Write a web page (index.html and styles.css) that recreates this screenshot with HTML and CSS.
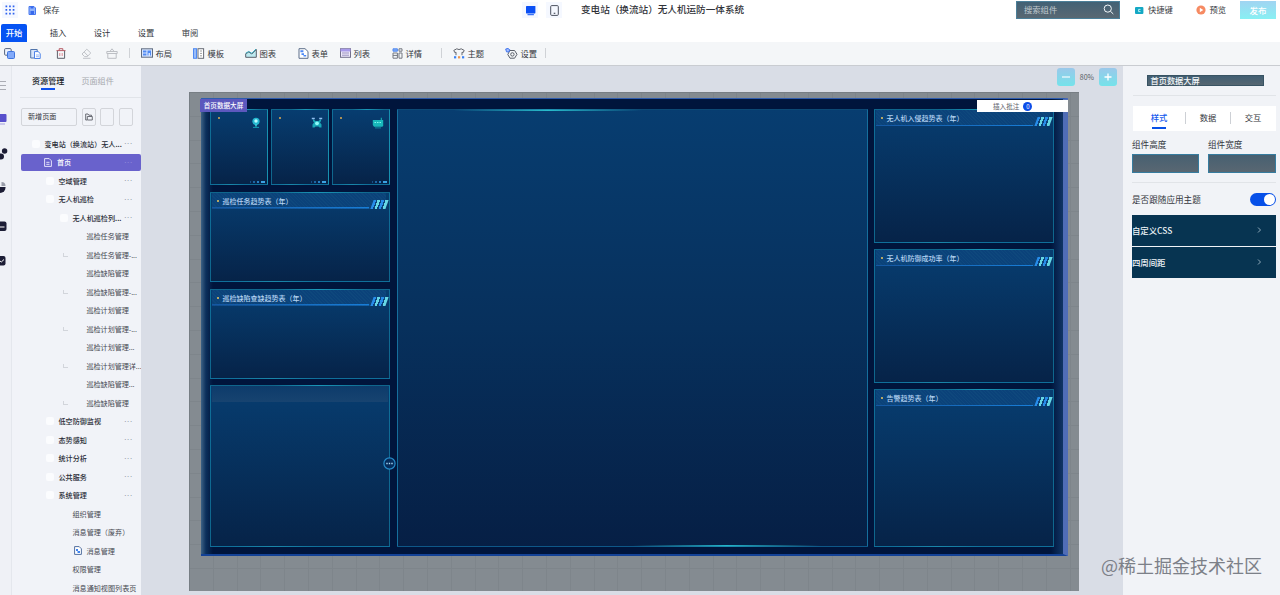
FILE: index.html
```html
<!DOCTYPE html>
<html lang="zh-CN">
<head>
    <meta charset="UTF-8">
    <meta name="viewport" content="width=device-width, initial-scale=1.0">
    <title>变电站（换流站）无人机运防一体系统</title>
    <link rel="stylesheet" href="styles.css">
</head>
<body>
    <header class="topbar">
        <span class="apps"><svg width="10" height="10" viewBox="0 0 10 10" fill="#2f62ee"><path d="M.5 .5h1.7v1.7H.5zM4.1 .5h1.7v1.7H4.1zM7.7 .5h1.7v1.7H7.7zM.5 4.1h1.7v1.7H.5zM4.1 4.1h1.7v1.7H4.1zM7.7 4.1h1.7v1.7H7.7zM.5 7.7h1.7v1.7H.5zM4.1 7.7h1.7v1.7H4.1zM7.7 7.7h1.7v1.7H7.7z"/></svg></span>
        <svg width="8" height="9" viewBox="0 0 8 9"><path d="M1 .5h5L7.5 2v6.5H1z" fill="#8fb2fa" stroke="#4676ee"/><path d="M2.5 .5h3v2h-3zM2.5 5h3.500v3.500H2.500z" fill="#3769ed"/></svg>
        <span class="save">保存</span>
        <span class="device on"><svg width="11" height="11" viewBox="0 0 11 11" fill="#0a4ff5"><rect x="1" y="1" width="9.4" height="7.4" rx=".6"/><path d="M2.5 9.2h6.4v1H2.5z"/></svg></span>
        <span class="device"><svg width="9" height="11" viewBox="0 0 9 11" fill="none" stroke="#4d5260"><rect x=".7" y=".6" width="7.6" height="9.8" rx="1"/><path d="M3.7 8.3h1.6" stroke-width="1.2"/></svg></span>
        <span class="title">变电站（换流站）无人机运防一体系统</span>
        <div class="search">
            <span>搜索组件</span>
            <svg width="11" height="11" viewBox="0 0 11 11" fill="none" stroke="#f2f7fa"><circle cx="4.8" cy="4.6" r="3.6"/><path d="M7.5 7.3 10.3 10"/></svg>
        </div>
        <svg width="9" height="7" viewBox="0 0 9 7"><rect width="8.4" height="7" rx="1" fill="#14a8c4"/><path d="M5.5 2.4H3.6v2.2h1.9" fill="none" stroke="#c9f6fb" stroke-width=".9"/></svg>
        <span>快捷键</span>
        <svg width="10" height="10" viewBox="0 0 10 10"><circle cx="5" cy="5" r="4.6" fill="#f68a62"/><path d="M3.8 2.8v4.4L7.3 5z" fill="#fff"/></svg>
        <span>预览</span>
        <button class="publish">发布</button>
    </header>

    <nav class="menu">
        <a class="active">开始</a>
        <a>插入</a>
        <a>设计</a>
        <a>设置</a>
        <a>审阅</a>
    </nav>

    <div class="toolbar">
        <svg width="11" height="11" viewBox="0 0 11 11"><rect x=".6" y=".6" width="6.6" height="6.6" rx="1" fill="#eef4ff" stroke="#56647d"/><rect x="3.5" y="3.5" width="7" height="7" rx="1" fill="#82aafa" stroke="#3f75dd"/></svg>
        <svg width="11" height="11" viewBox="0 0 11 11"><path d="M.7 1.5h6.5v8.5H.7z" fill="#d6e4fb" stroke="#5275ac"/><path d="M4.5 3.6h3.6L10.2 5.5v5H4.5z" fill="#fff" stroke="#4c82e8"/><path d="M6 7h3M6 8.7h3" stroke="#6b9af0" stroke-width=".7"/></svg>
        <svg width="10" height="11" viewBox="0 0 10 11" fill="none"><path d="M.5 2.6h9M3.2 2.4V.7h3.6v1.7" stroke="#b65a64"/><path d="M1.4 3v7.3h7.2V3" stroke="#5d6069"/><path d="M3.8 5v3M6.2 5v3" stroke="#de8b94"/></svg>
        <svg width="11" height="11" viewBox="0 0 11 11" fill="none" stroke="#c0c3c8"><path d="M1 6 5.8 1.2 9.8 5 6.2 8.6H3.6zM3.2 4l3.8 4M2 10.3h7.5"/></svg>
        <svg width="12" height="11" viewBox="0 0 12 11" fill="none" stroke="#bcbfc4"><path d="M.8 3.5h10.4v2H.8zM1.8 5.5h8.4v4.8H1.8zM4 3.3 6 .8l2 2.5"/></svg>
        <i class="sep"></i>
        <span class="tool"><svg width="12" height="10" viewBox="0 0 12 10"><rect x=".5" y=".8" width="11" height="8.4" fill="#d7e5ff" stroke="#606c80"/><path d="M2 2.4h3.4v2H2zM2 5.4h3.4v2H2zM6.5 2.4H10v5H9V5H7.5v2.4h-1z" fill="#508af2"/></svg>布局</span>
        <span class="tool"><svg width="12" height="11" viewBox="0 0 12 11"><rect x=".5" y=".7" width="3" height="9.6" fill="#99bcf8" stroke="#508af2"/><rect x="5" y=".7" width="5.6" height="9.6" fill="#fff" stroke="#666b75"/><path d="M7 3h2M7 5.4h2M7 7.8h2" stroke="#777" stroke-width=".7"/></svg>模板</span>
        <span class="tool"><svg width="12" height="10" viewBox="0 0 12 10"><path d="M.7 9.3V5.8L3.8 4l3 2 4.5-4.5v7.8z" fill="#bdeaf0" stroke="#595f6a"/><path d="M.7 5.2 3.8 3.5l3 1.8L11 1" fill="none" stroke="#37a7bb"/></svg>图表</span>
        <span class="tool"><svg width="11" height="11" viewBox="0 0 11 11"><path d="M1 .7h6L10 3.5v6.8H1z" fill="#fff" stroke="#5d6f8b"/><path d="M2.4 2.3h3v2h-3zM3.5 5.300H6V7H3.500zM5.500 7h2.700v1.500H5.500z" fill="#4c88f5"/></svg>表单</span>
        <span class="tool"><svg width="11" height="10" viewBox="0 0 11 10"><rect x=".5" y=".7" width="10" height="8.6" fill="#eeeafa" stroke="#74718c"/><path d="M.5 .7h10v2.8H.5z" fill="#a89aea"/><path d="M2 5h7M2 7.2h7" stroke="#9a91bf"/></svg>列表</span>
        <span class="tool"><svg width="11" height="11" viewBox="0 0 11 11" fill="none" stroke="#747881"><path d="M1 .8h4.4v2.4H1z" fill="#7ca9f7" stroke="#528af0"/><path d="M1 5h4.4v5.2H1zM7 5h3v5.2H7zM1 7.4h4.4"/><path d="M7 .8h3v2.4H7z"/></svg>详情</span>
        <i class="sep"></i>
        <span class="tool"><svg width="12" height="11" viewBox="0 0 12 11"><path d="M3 7.200V4.200l-1.200.4L.8 2.400 3.800 .800Q6 2.400 8.200 .800l3 1.600-1 2.200L9 4.200v3" fill="none" stroke="#63666e"/><path d="M1 8.200h2.200v2.200H1z" fill="#3982f5"/><path d="M5 8.200h2.200v2.200H5z" fill="#f1964b"/><path d="M9 8.200h2.200v2.200H9z" fill="#3982f5"/></svg>主题</span>
        <span class="tool"><svg width="13" height="11" viewBox="0 0 13 11" fill="none"><path d="M4.8 2.5h4.8L12 6.3l-2.4 3.9H5L2.8 6.5z" stroke="#5b606a"/><circle cx="7.4" cy="6.4" r="1.7" stroke="#5b606a"/><path d="M.7 1 3 .5l1.8 1.3L3.7 4 1.5 3.8z" fill="#a5bdfd" stroke="#3d73ee"/></svg>设置</span>
        <i class="sep"></i>
    </div>

    <main class="workspace">
        <aside class="rail">
            <svg width="8" height="190" viewBox="0 0 8 190">
                <path d="M0 5.500h6M0 9.500h6M0 13.500h6" stroke="#989ba3" stroke-width=".8"/>
                <rect x="-3" y="38" width="9.5" height="8" rx="1" fill="#5750cc"/><path d="M0 48h5" stroke="#a39fe1"/>
                <g fill="#1c1d35"><circle cx="4.6" cy="75" r="2.7"/><circle cx="1" cy="80.5" r="3"/><path d="M-4 111h9.500A5.500 5.500 0 0 1 0 117z"/><rect x="-4" y="145.500" width="10.500" height="9.500" rx="2"/><rect x="-5" y="180" width="10.500" height="9.500" rx="2"/></g>
                <path d="M1.500 110v-4a4 4 0 0 1 4 4z" fill="#999da9"/>
                <path d="M0 151h4.500M0 185l1.300 1 2.700-2.500" fill="none" stroke="#fff"/>
            </svg>
        </aside>

        <aside class="sidebar">
            <div class="side-tabs">
                <span class="active">资源管理</span>
                <span>页面组件</span>
            </div>
            <div class="side-actions">
                <span class="new-page">新增页面</span>
                <span class="box"><svg width="8" height="8" viewBox="0 0 8 8" fill="none" stroke="#5c5f68" stroke-width=".9"><path d="M2 7H.7V1h2.300l.8 1.200h2.700v1M2.300 3.500h5V7h-5z"/></svg></span>
                <span class="box"></span>
                <span class="box"></span>
            </div>
            <ul class="tree">
                <li class="l1 folder">变电站（换流站）无人...<b>···</b></li>
                <li class="home"><svg width="8" height="9" viewBox="0 0 8 9" fill="none" stroke="#f0efff" stroke-width=".9"><path d="M.6 .6h4.600l2.200 2.200v5.600H.6zM2.300 4.300h3.200M2.300 6.300h3.200"/></svg>首页<b>···</b></li>
                <li class="l2 folder">空域管理<b>···</b></li>
                <li class="l2 folder">无人机巡检<b>···</b></li>
                <li class="l3 folder">无人机巡检列...<b>···</b></li>
                <li class="l4">巡检任务管理</li>
                <li class="l4 branch">巡检任务管理-...</li>
                <li class="l4">巡检缺陷管理</li>
                <li class="l4 branch">巡检缺陷管理-...</li>
                <li class="l4">巡检计划管理</li>
                <li class="l4 branch">巡检计划管理-...</li>
                <li class="l4">巡检计划管理...</li>
                <li class="l4 branch">巡检计划管理详...</li>
                <li class="l4">巡检缺陷管理...</li>
                <li class="l4 branch">巡检缺陷管理</li>
                <li class="l2 folder">低空防御监视<b>···</b></li>
                <li class="l2 folder">态势感知<b>···</b></li>
                <li class="l2 folder">统计分析<b>···</b></li>
                <li class="l2 folder">公共服务<b>···</b></li>
                <li class="l2 folder">系统管理<b>···</b></li>
                <li class="l3">组织管理</li>
                <li class="l3">消息管理（废弃）</li>
                <li class="message"><svg width="8" height="9" viewBox="0 0 8 9"><path d="M.6 .6h4.600l2.200 2.200v5.600H.6z" fill="#fff" stroke="#526f9f"/><path d="M2 3h2v2H2zM3.500 5H6v2H3.500z" fill="#3f83ef"/></svg>消息管理</li>
                <li class="l3">权限管理</li>
                <li class="l3">消息通知视图列表页</li>
            </ul>
        </aside>

        <section class="canvas">
            <div class="zoom">
                <button><svg width="10" height="10" viewBox="0 0 10 10" stroke="#fff" stroke-width="1.100"><path d="M1 5h8"/></svg></button>
                <span>80%</span>
                <button><svg width="10" height="10" viewBox="0 0 10 10" stroke="#fff" stroke-width="1.300"><path d="M1.500 5h7M5 1.500v7"/></svg></button>
            </div>
            <div class="board">
                <div class="screen">
                    <div class="column left">
                        <div class="cards">
                            <div class="card"><svg width="12" height="12" viewBox="0 0 12 12"><circle cx="6" cy="4.300" r="3.600" fill="#23b6cf"/><circle cx="6" cy="4" r="1.700" fill="#b9fbff"/><path d="M5.200 7h1.600v2.500H5.200z" fill="#38d4df"/><path d="M3 10.400h6" stroke="#159db2"/></svg><i></i></div>
                            <div class="card"><svg width="12" height="12" viewBox="0 0 12 12"><path d="M2 2l2.500 2h3L10 2v2L9 5.500l1.500 2v3H8.500L7.500 9.500h-3l-1 1h-2v-3l1.500-2L2 4z" fill="#1aa9b8"/><circle cx="6" cy="6.300" r="1.900" fill="#8efbfa"/><path d="M.8 1.500h3M8.200 1.500h3" stroke="#8fbdf0" stroke-width="1.500"/></svg><i></i></div>
                            <div class="card"><svg width="12" height="12" viewBox="0 0 12 12"><path d="M.8 3h8V.8h1V3h1.400v6l-1 .7H2L.8 8z" fill="#18b8ba"/><path d="M3 10.900h6" stroke="#138d9f"/><path d="M2.500 5.500h1.500M5 5.500h1.500M7.500 5.500H9" stroke="#7ff7ee"/></svg><i></i></div>
                        </div>
                        <div class="panel"><h3>巡检任务趋势表（年）<i></i></h3></div>
                        <div class="panel"><h3>巡检缺陷查缺趋势表（年）<i></i></h3></div>
                        <div class="panel plain"></div>
                    </div>
                    <div class="panel center"></div>
                    <div class="column right">
                        <div class="panel"><h3>无人机入侵趋势表（年）<i></i></h3></div>
                        <div class="panel"><h3>无人机防御成功率（年）<i></i></h3></div>
                        <div class="panel"><h3>告警趋势表（年）<i></i></h3></div>
                    </div>
                    <span class="tag">首页数据大屏</span>
                    <div class="note">插入批注<b>0</b></div>
                    <span class="more"><svg width="13" height="13" viewBox="0 0 13 13"><circle cx="6.500" cy="6.500" r="5.600" fill="#062c5b" stroke="#268bc8" stroke-width="1.200"/><path d="M3.300 5.800h1.400v1.400H3.300zM5.800 5.800h1.400v1.400H5.800zM8.300 5.800h1.400v1.400H8.300z" fill="#a7d9f7"/></svg></span>
                </div>
            </div>
        </section>

        <aside class="props">
            <div class="name">首页数据大屏</div>
            <div class="prop-tabs">
                <span class="active">样式</span>
                <span>数据</span>
                <span>交互</span>
            </div>
            <div class="sizes">
                <label>组件高度<i></i></label>
                <label>组件宽度<i></i></label>
            </div>
            <div class="follow">是否跟随应用主题<span class="switch"></span></div>
            <div class="fold">自定义CSS<svg width="5" height="8" viewBox="0 0 5 8" fill="none" stroke="#9cb4c3" stroke-width=".9"><path d="m1 1.500 2.500 2.500L1 6.500"/></svg></div>
            <div class="fold">四周间距<svg width="5" height="8" viewBox="0 0 5 8" fill="none" stroke="#9cb4c3" stroke-width=".9"><path d="m1 1.500 2.500 2.500L1 6.500"/></svg></div>
        </aside>
    </main>

    <div class="watermark">@稀土掘金技术社区</div>
</body>
</html>
```
FILE: styles.css
```css
* {
    margin: 0;
    padding: 0;
    box-sizing: border-box;
}

body {
    width: 1280px;
    height: 595px;
    overflow: hidden;
    position: relative;
    font-family: "Noto Sans CJK SC", "Liberation Sans", sans-serif;
    font-size: 8.3px;
    color: #34373d;
    background: #fff;
}

svg {
    display: block;
    flex-shrink: 0;
}

button {
    border: none;
    font-family: inherit;
}

i {
    font-style: normal;
}

/* header */
.topbar {
    height: 20px;
    padding-left: 2px;
    display: grid;
    grid-template-columns: 26px 15px 479px 24px 35px 435px 118.5px 13.5px 47.5px 14px 30.5px 36px;
    align-items: center;
    white-space: nowrap;
}

.topbar > span:not(.apps, .device) {
    padding-bottom: 2px;
}

.apps,
.device {
    width: 16px;
    height: 16px;
    display: flex;
    align-items: center;
    justify-content: center;
    background: #f5f8ff;
}

.title {
    font-size: 9.6px;
    font-weight: 500;
    color: #303238;
}

.search {
    width: 104px;
    height: 18px;
    padding: 0 5px 1px 7px;
    display: flex;
    align-items: center;
    justify-content: space-between;
    color: #c0c9cf;
    border: 1px solid #4b7f99;
    background: linear-gradient(#426175, #596873);
}

.search span {
    padding-bottom: 1px;
}

.publish {
    height: 18px;
    color: #fff;
    font-size: 8.5px;
    font-weight: 500;
    background: linear-gradient(#a1d4f2, #88f0f3);
}

.menu {
    height: 22px;
    padding: 4px 0 0 1px;
    display: flex;
    gap: 18px;
}

.menu a {
    width: 26px;
    height: 18px;
    line-height: 17px;
    text-align: center;
}

.menu .active {
    color: #fff;
    font-weight: 500;
    background: #0553f3;
    border-radius: 2px 2px 0 0;
}

.toolbar {
    height: 24px;
    padding: 0 0 1px 4px;
    display: grid;
    grid-template-columns: 26px 26px 25px 25px 23px 12px 52px 52px 53px 42px 52px 49px 12px 52px 40px 1px;
    align-items: center;
    background: #f4f6f8;
    border-bottom: 1px solid #c9ccd1;
}

.sep {
    width: 1px;
    height: 10px;
    background: #cfd2d6;
}

.tool {
    display: flex;
    align-items: center;
    gap: 2.5px;
    line-height: 12px;
}

.workspace {
    height: 529px;
    display: flex;
}

.rail {
    width: 12px;
    padding-top: 10px;
    background: #eff1f6;
    border-right: 1px solid #e4e7ed;
}

/* page tree */
.sidebar {
    width: 129px;
    overflow: hidden;
    background: #f1f3f8;
    font-size: 7.1px;
}

.side-tabs {
    height: 32px;
    margin-left: 8px;
    padding-left: 12px;
    display: flex;
    gap: 17px;
    font-size: 8.1px;
    line-height: 29px;
    color: #a6a9ae;
    border-bottom: 1px solid #e1e4e9;
}

.side-tabs .active {
    color: #202329;
    font-weight: 500;
}

.side-tabs .active::after {
    content: "";
    display: block;
    width: 14px;
    height: 2px;
    margin: -7px auto 0;
    background: #0d50ec;
}

.side-actions {
    padding: 10px 0 0 9px;
    height: 36.5px;
    display: flex;
    gap: 4.7px;
}

.new-page,
.box {
    height: 18px;
    border: 1px solid #d3d5da;
    border-radius: 2px;
}

.new-page {
    width: 56px;
    padding-left: 6px;
    line-height: 15px;
}

.box {
    width: 14px;
    display: flex;
    align-items: center;
    justify-content: center;
}

.tree {
    list-style: none;
}

.tree li {
    height: 18.5px;
    margin-left: 9px;
    padding-right: 8.5px;
    display: flex;
    align-items: center;
    white-space: nowrap;
    color: #464951;
}

.tree b {
    margin-left: auto;
    color: #7d818a;
    font-family: "Liberation Sans", sans-serif;
    font-size: 8px;
    font-weight: 400;
    letter-spacing: .2px;
}

.tree .folder {
    color: #292c36;
    font-weight: 500;
}

.folder::before {
    content: "";
    flex-shrink: 0;
    width: 8px;
    height: 8px;
    margin-right: 5px;
    border-radius: 2px;
    background: #fbfcfe;
}

.tree .l1 {
    padding-left: 10.5px;
}

.tree .l2 {
    padding-left: 24.5px;
}

.tree .l3 {
    padding-left: 51.5px;
}

.tree .l3.folder {
    padding-left: 38.5px;
}

.tree .l4 {
    padding-left: 65.5px;
    padding-right: 0;
    letter-spacing: -.05px;
}

.tree .branch {
    padding-left: 42px;
}

.branch::before {
    content: "";
    flex-shrink: 0;
    width: 4px;
    height: 3px;
    margin-right: 18.5px;
    border: solid #d2d5db;
    border-width: 0 0 1px 1px;
}

.tree .home {
    padding-left: 23px;
    gap: 5px;
    height: 17px;
    margin-top: .7px;
    margin-bottom: .8px;
    color: #fff;
    font-weight: 500;
    background: #6962cc;
    border-radius: 2px;
}

.tree .home b {
    color: #9c97e0;
}

.tree .message {
    padding-left: 53px;
    gap: 4.5px;
}

/* canvas */
.canvas {
    width: 982px;
    background: #d9dde6;
}

.zoom {
    height: 26px;
    padding: 2px 6px 0 0;
    display: flex;
    justify-content: flex-end;
    gap: 5px;
    font-size: 7px;
    line-height: 19px;
    color: #555a63;
}

.zoom button {
    width: 18px;
    height: 18px;
    display: flex;
    align-items: center;
    justify-content: center;
    border-radius: 3px;
    background: linear-gradient(#9bc8ea, #74e3ea);
}

.board {
    width: 890px;
    height: 499px;
    margin-left: 48px;
    padding: 5px 11px 0;
    border: solid #777e84;
    border-width: 1px 0 0 1px;
    background:
        repeating-linear-gradient(90deg, transparent 0 22.8px, #7e858b 22.8px 23.8px),
        repeating-linear-gradient(transparent 0 22.8px, #7e858b 22.8px 23.8px),
        #848b91;
}

.screen {
    position: relative;
    width: 867px;
    height: 458px;
    padding: 10px 14px 7px 9px;
    display: grid;
    grid-template-columns: 180px 471px 180px;
    column-gap: 6.5px;
    border-top: 1px solid #2e5cae;
    border-right: 5px solid #506db6;
    border-bottom: 2px solid #134297;
    background: linear-gradient(90deg, #3d6285, #0b2f5b 5px, #00153c 12px, #00153c 850px, #103565);
}

.column {
    display: grid;
}

.left {
    grid-template-rows: 76px 90px 90px 162px;
    row-gap: 6.8px;
}

.right {
    grid-template-rows: 134px 134px 158px;
    row-gap: 6.2px;
}

.cards {
    display: grid;
    grid-template-columns: repeat(3, 58px);
    column-gap: 3px;
}

.card,
.panel {
    border: 1px solid #148bb0a6;
    background:
        linear-gradient(90deg, transparent 35%, #25acc2 60%, transparent 90%) top / 100% 1px no-repeat border-box,
        linear-gradient(90deg, transparent 10%, #267f9c 35%, transparent 60%) bottom / 100% 1px no-repeat border-box,
        linear-gradient(#073d70, #062348);
}

.card {
    padding: 7px 5px 1px;
    display: flex;
    flex-direction: column;
    align-items: flex-end;
    border-right-color: #1791b0;
}

.card::before {
    content: "";
    flex-shrink: 0;
    width: 2px;
    height: 2px;
    margin: 0 auto -2px 2px;
    background: #a98f56;
}

.card svg {
    margin-bottom: auto;
}

.card i {
    width: 17px;
    height: 2px;
    margin-right: -3px;
    background: linear-gradient(90deg, transparent 2px, #164f87 2px 3px, transparent 3px 5px, #1d65a5 5px 7px, transparent 7px 9px, #287fc4 9px 11px, transparent 11px 13px, #3ba2e3 13px);
}

.panel h3 {
    height: 16px;
    margin: 0 3px 0 1px;
    padding-left: 5px;
    display: flex;
    align-items: center;
    gap: 3.5px;
    font-size: 7px;
    line-height: 16px;
    font-weight: 500;
    color: #b5d3f2;
    background:
        linear-gradient(90deg, #1557a1, #187ed8) 0 100% / 157px 1.5px no-repeat,
        repeating-linear-gradient(45deg, transparent 0 1.5px, #15548155 1.5px 2.5px),
        #0b427a;
}

.panel h3::before {
    content: "";
    width: 2px;
    height: 2px;
    background: #b5a765;
}

.panel h3 i {
    width: 14.5px;
    height: 9px;
    margin: 7px 0 0 auto;
    transform: skewX(-20deg);
    background: linear-gradient(90deg, #278ce9 0 2.5px, #0b427a 2.5px 4px, #67d7e4 4px 6.5px, #0b427a 6.5px 8px, #278ce9 8px 10.5px, #0b427a 10.5px 12px, #67d7e4 12px);
}

.plain::before {
    content: "";
    display: block;
    height: 16px;
    margin: 0 1px;
    background: linear-gradient(#0d3b6b, #174370);
}

.center {
    border-color: #156f9d88 #156f9d;
    background:
        linear-gradient(90deg, transparent 12%, #29bdcc 32%, transparent 52%) top / 100% 2px no-repeat border-box,
        linear-gradient(90deg, transparent 50%, #25b5c9 70%, transparent 90%) bottom / 100% 2px no-repeat border-box,
        linear-gradient(#073d70, #07305c 50%, #061f45);
}

.tag {
    position: absolute;
    left: -1px;
    top: 0;
    width: 47px;
    height: 13px;
    font-size: 6.6px;
    line-height: 13px;
    text-align: center;
    font-weight: 500;
    color: #fff;
    background: #5c58bd;
}

.note {
    position: absolute;
    left: 776px;
    top: 1px;
    width: 91px;
    height: 12px;
    padding-left: 16px;
    display: flex;
    align-items: center;
    gap: 4px;
    font-size: 6.6px;
    color: #5d616a;
    background: #fff;
}

.note b {
    width: 9px;
    height: 9px;
    font-size: 6px;
    line-height: 9px;
    font-weight: 400;
    text-align: center;
    color: #fff;
    background: #0c4ce8;
    border-radius: 50%;
}

.more {
    position: absolute;
    left: 182px;
    top: 358px;
}

/* property panel */
.props {
    width: 157px;
    padding: 9px 4px 0 9px;
    background: #f1f3f7;
    font-size: 8.6px;
}

.name {
    width: 117px;
    height: 11px;
    margin: 0 0 20px 14.5px;
    padding-left: 3px;
    line-height: 8px;
    font-size: 8.2px;
    font-weight: 500;
    color: #f3f7fa;
    background: linear-gradient(#405e73, #566671);
    border: 1px solid #385363;
}

.prop-tabs {
    height: 25px;
    margin-left: 1px;
    display: grid;
    grid-template-columns: 52px 45px 45px;
    align-items: center;
    text-align: center;
    font-size: 8.3px;
    background: #fff;
    box-shadow: 0 -10px #f1f3f7, 0 -11px #e1e4e8;
}

.prop-tabs span + span {
    height: 12px;
    margin-bottom: 2px;
    border-left: 1px solid #cdd0d5;
    line-height: 11px;
}

.prop-tabs .active {
    color: #1358ed;
    font-weight: 500;
    line-height: 18px;
}

.prop-tabs .active::after {
    content: "";
    display: block;
    width: 14px;
    height: 2px;
    margin: 1px auto 0;
    background: #0750e7;
}

.sizes {
    height: 52px;
    padding-top: 7px;
    display: grid;
    grid-template-columns: 67px 68px;
    gap: 9px;
    border-bottom: 1px solid #e1e4e8;
}

.sizes label {
    line-height: 13px;
}

.sizes i {
    display: block;
    height: 19px;
    margin-top: 3px;
    border: 1px solid #367c9f;
    background: linear-gradient(#476071, #596772);
}

.follow {
    height: 32px;
    display: flex;
    align-items: center;
    justify-content: space-between;
}

.switch {
    width: 26px;
    height: 13px;
    padding: 1px;
    border-radius: 7px;
    background: #0750e8;
}

.switch::after {
    content: "";
    display: block;
    width: 11px;
    height: 11px;
    margin-left: auto;
    border-radius: 50%;
    background: #fff;
}

.fold {
    height: 31px;
    margin-bottom: 1px;
    padding: 0 14px 2px 0;
    display: flex;
    align-items: center;
    justify-content: space-between;
    font-size: 8.4px;
    font-weight: 500;
    color: #f1f6f9;
    background: #073451;
}

.watermark {
    position: absolute;
    left: 1101px;
    top: 552px;
    font-size: 18px;
    line-height: 26px;
    font-weight: 400;
    color: #7c8088;
    white-space: nowrap;
}
```
